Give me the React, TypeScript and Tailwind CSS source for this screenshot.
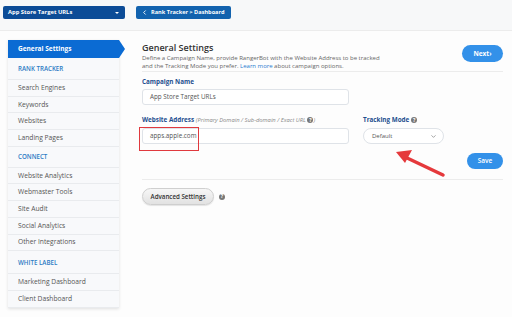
import { ChevronDown, ChevronLeft } from 'lucide-react';

const menu = [
  { type: 'head', label: 'RANK TRACKER', h: 'h-[22px]' },
  { type: 'item', label: 'Search Engines' },
  { type: 'item', label: 'Keywords' },
  { type: 'item', label: 'Websites' },
  { type: 'item', label: 'Landing Pages' },
  { type: 'head', label: 'CONNECT', h: 'h-[21px]' },
  { type: 'item', label: 'Website Analytics' },
  { type: 'item', label: 'Webmaster Tools' },
  { type: 'item', label: 'Site Audit' },
  { type: 'item', label: 'Social Analytics' },
  { type: 'item', label: 'Other Integrations' },
  { type: 'head', label: 'WHITE LABEL', h: 'h-[23px]' },
  { type: 'item', label: 'Marketing Dashboard' },
  { type: 'item', label: 'Client Dashboard' },
];

function Help() {
  return (
    <span className="inline-flex h-[6px] w-[6px] items-center justify-center rounded-full bg-[#777] align-middle text-[5px] font-bold not-italic leading-none text-white">
      ?
    </span>
  );
}

export default function App() {
  return (
    <div className="relative h-[317px] w-[512px] overflow-hidden bg-[#fdfdfd] font-['Open_Sans',sans-serif]">
      {/* TOP BAR */}
      <div className="flex h-[31px] items-start gap-[11px] border-b border-[#ececec] bg-[#f7f8f9] px-[3px] pt-[6px]">
        <div className="flex h-[13px] w-[122px] items-center justify-between rounded-[2px] bg-[#0c4c97] pl-[5px] pr-[6px] text-[5.8px] font-bold text-white">
          <span>App Store Target URLs</span>
          <span className="h-0 w-0 border-x-[2px] border-t-[2px] border-x-transparent border-t-white" />
        </div>
        <div className="flex h-[13px] w-[95px] items-center gap-[3px] whitespace-nowrap rounded-[2px] bg-[#1262ae] px-[5px] text-[5.6px] font-bold text-white">
          <ChevronLeft className="h-[7px] w-[7px]" strokeWidth={3} />
          <span>Rank Tracker &gt; Dashboard</span>
        </div>
      </div>

      <div className="flex">
        {/* SIDEBAR */}
        <div className="ml-[8px] mt-[9px] w-[111px] shrink-0 bg-[#f8f9fb] shadow-[0_1px_3px_rgba(0,0,0,0.12)]">
          <div className="relative flex h-[18px] items-center bg-[#0b6bd3] pl-[10px] text-[6.5px] font-bold text-white">
            General Settings
            <span className="absolute -right-[6px] top-0 h-0 w-0 border-y-[9px] border-l-[6px] border-y-transparent border-l-[#0b6bd3]" />
          </div>
          {menu.map((m, i) =>
            m.type === 'head' ? (
              <div
                key={i}
                className={`flex ${m.h} items-center border-b border-[#e9ebee] pl-[10px] text-[6.2px] font-semibold text-[#2b7bc4]`}
              >
                {m.label}
              </div>
            ) : (
              <div
                key={i}
                className="flex h-[16.7px] items-center border-b border-[#e9ebee] pl-[10px] text-[6.7px] text-[#555]"
              >
                {m.label}
              </div>
            )
          )}
        </div>

        {/* MAIN */}
        <div className="ml-[23px] mt-[10px] w-[361px]">
          <div className="flex items-start justify-between border-b border-[#ececec] pb-[1px]">
            <div>
              <h2 className="text-[9px] font-semibold leading-[14px] text-[#333]">General Settings</h2>
              <p className="text-[6px] leading-[7.5px] text-[#666]">
                Define a Campaign Name, provide RangerBot with the Website Address to be tracked
                <br />
                and the Tracking Mode you prefer. <span className="text-[#2a7bd0]">Learn more</span> about campaign
                options.
              </p>
            </div>
            <button className="mt-[4px] flex h-[17px] w-[41px] items-center justify-center rounded-full bg-[#3391e9] text-[6.5px] font-bold text-white">
              Next›
            </button>
          </div>

          <div className="mt-[6px] text-[6.3px] font-bold leading-[8px] text-[#1e4f8f]">Campaign Name</div>
          <div className="mt-[3px] flex h-[16px] w-[207px] items-center rounded-[3px] border border-[#dfe3e8] bg-white pl-[7px] text-[6.3px] text-[#555]">
            App Store Target URLs
          </div>

          <div className="mt-[11px] flex gap-[14px]">
            <div className="relative">
              <div className="text-[6.3px] font-bold leading-[8px] text-[#1e4f8f]">
                Website Address{' '}
                <span className="text-[5.8px] font-normal italic text-[#888]">
                  (Primary Domain / Sub-domain / Exact URL <Help />)
                </span>
              </div>
              <div className="mt-[4px] flex h-[16px] w-[207px] items-center rounded-[3px] border border-[#dfe3e8] bg-white pl-[7px] text-[6.3px] text-[#555]">
                apps.apple.com
              </div>
              <div className="absolute left-[-3px] top-[11px] h-[24px] w-[60px] border-[1.5px] border-[#e0393e]" />
            </div>
            <div>
              <div className="flex items-center gap-[2px] text-[6.3px] font-bold leading-[8px] text-[#1e4f8f]">
                Tracking Mode <Help />
              </div>
              <div className="mt-[4px] flex h-[16px] w-[81px] items-center justify-between rounded-full border border-[#dfe3e8] bg-white pl-[8px] pr-[6px] text-[6px] text-[#555]">
                Default
                <ChevronDown className="h-[7px] w-[7px] text-[#666]" />
              </div>
            </div>
          </div>

          <div className="mt-[9px] flex justify-end border-b border-[#ececec] pb-[10px]">
            <button className="flex h-[16px] w-[36px] items-center justify-center rounded-full bg-[#3391e9] text-[6.5px] font-semibold text-white">
              Save
            </button>
          </div>

          <div className="mt-[8px] flex items-center gap-[5px]">
            <button className="flex h-[17px] w-[72px] items-center justify-center rounded-full border border-[#cfcfcf] bg-gradient-to-b from-[#f7f7f7] to-[#e2e2e2] text-[6.2px] font-semibold text-[#333] shadow-[0_1px_1px_rgba(0,0,0,0.1)]">
              Advanced Settings
            </button>
            <Help />
          </div>
        </div>
      </div>

      {/* ANNOTATION ARROW */}
      <svg className="absolute left-0 top-0" width="512" height="317" viewBox="0 0 512 317">
        <line x1="443" y1="175" x2="405" y2="157" stroke="#e5393c" strokeWidth="3.5" strokeLinecap="round" />
        <polygon points="396,152 412,150 405,163" fill="#e5393c" />
      </svg>
    </div>
  );
}
